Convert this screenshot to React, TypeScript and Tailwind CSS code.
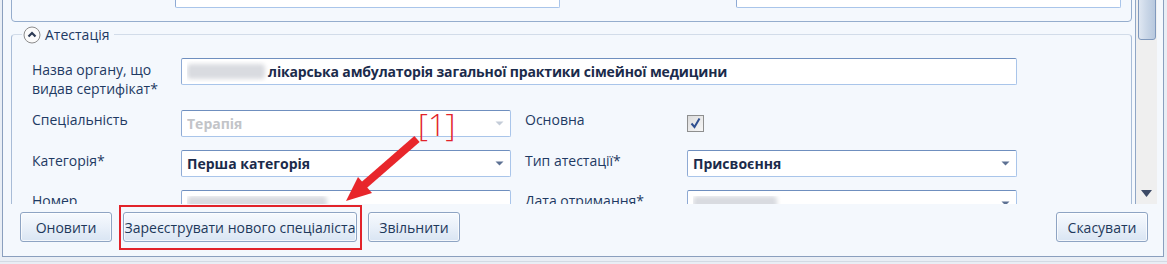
import React from 'react'

function Arrow({ light }: { light?: boolean }) {
	return (
		<svg width="9" height="5" viewBox="0 0 9 5" className="shrink-0">
			<path d="M0.5 0.5 L8.5 0.5 L4.5 4.5 Z" fill={light ? '#c4ccd8' : '#5d7193'} />
		</svg>
	)
}

function Field({ w, children, combo, light }: { w: string; children?: React.ReactNode; combo?: boolean; light?: boolean }) {
	return (
		<div className={`${w} h-[27px] shrink-0 flex items-center bg-white rounded-[2px] border border-[#a9c5ea] border-t-[#6f8fbf] border-l-[#8eaad4] pl-[5px] pr-[6px]`}>
			<div className="flex-1 flex items-center overflow-hidden whitespace-nowrap">{children}</div>
			{combo && <Arrow light={light} />}
		</div>
	)
}

function Blur({ w }: { w: string }) {
	return <div className={`${w} h-[15px] bg-[#d9dbe0] blur-[2px] rounded-sm shrink-0`} />
}

function Btn({ label, w }: { label: string; w: string }) {
	return (
		<button className={`${w} h-[30px] rounded-[3px] border border-[#8ea4c3] bg-gradient-to-b from-[#f7fafe] via-[#e9f0f9] to-[#d9e5f3] text-[14px] text-[#1e395b] shadow-[inset_0_0_0_1px_#ffffffb0]`}>
			{label}
		</button>
	)
}

export default function App() {
	return (
		<div className="relative w-[1167px] h-[264px] bg-[#e9eef5] font-['Open_Sans',sans-serif] text-[#1e3a63] overflow-hidden">
			<div className="ml-[2px] w-[1162px] h-[257px] border-x border-b border-[#8a9fbe] bg-[#f4f8fd] flex flex-col">
				<div className="h-[204px] flex shrink-0">
					<div className="flex-1 overflow-hidden">
						<div className="-mt-[40px] flex flex-col">
							{/* previous group, scrolled out */}
							<div className="ml-[8px] mr-[3px] h-[62px] border border-[#95adcd] rounded-[4px] flex items-end pb-[13px]">
								<div className="ml-[163px] flex gap-[176px]">
									<Field w="w-[385px]"><span className="font-bold text-[14px] text-[#1b2b4b]">020.12016</span></Field>
									<Field w="w-[385px]" />
								</div>
							</div>

							{/* Атестація */}
							<div className="ml-[8px] mr-[3px] mt-[12px] h-[240px] border border-[#a8bcd7] border-t-[#d2dce9] rounded-[4px] pl-[20px]">
								<div className="-mt-[9px] -ml-[10px] w-fit flex items-center gap-[4px] bg-[#f4f8fd] pr-[5px] pl-[1px]">
									<svg width="18" height="18" viewBox="0 0 18 18">
										<circle cx="9" cy="9" r="8" fill="#fbfbfb" stroke="#8c8c8c" />
										<path d="M5.5 10.5 L9 7 L12.5 10.5" fill="none" stroke="#2d3b55" strokeWidth="2.2" />
									</svg>
									<span className="text-[14px] leading-[18px]">Атестація</span>
								</div>

								<div className="mt-[14px] h-[52px] flex items-start">
									<div className="w-[149px] shrink-0 text-[14px] leading-[19px] pt-[2px]">Назва органу, що<br />видав сертифікат*</div>
									<Field w="w-[836px]">
										<Blur w="w-[78px]" />
										<span className="ml-[3px] font-bold text-[14px] tracking-[-0.15px] text-[#1b2b4b]">лікарська амбулаторія загальної практики сімейної медицини</span>
									</Field>
								</div>

								<div className="h-[40px] flex items-start">
									<div className="w-[149px] shrink-0 text-[14px] leading-[19px]">Спеціальність</div>
									<Field w="w-[330px]" combo light><span className="font-bold text-[14px] text-[#c2c4c8]">Терапія</span></Field>
									<div className="w-[162px] ml-[14px] shrink-0 text-[14px] leading-[19px]">Основна</div>
									<div className="mt-[5px] w-[17px] h-[17px] border border-[#8e8f8f] bg-gradient-to-br from-[#dcdcdc] to-[#f7f7f7] flex items-center justify-center">
										<svg width="13" height="13" viewBox="0 0 13 13">
											<path d="M2.5 6.5 L5.5 10 L10.5 1.5" fill="none" stroke="#2f4f8f" strokeWidth="2" />
										</svg>
									</div>
								</div>

								<div className="h-[40px] flex items-start">
									<div className="w-[149px] shrink-0 text-[14px] leading-[19px] pt-[1px]">Категорія*</div>
									<Field w="w-[330px]" combo><span className="font-bold text-[14px] text-[#1b2b4b]">Перша категорія</span></Field>
									<div className="w-[162px] ml-[14px] shrink-0 text-[14px] leading-[19px] pt-[1px]">Тип атестації*</div>
									<Field w="w-[330px]" combo><span className="font-bold text-[14px] text-[#1b2b4b]">Присвоєння</span></Field>
								</div>

								<div className="h-[40px] flex items-start">
									<div className="w-[149px] shrink-0 text-[14px] leading-[19px] pt-[1px]">Номер</div>
									<Field w="w-[330px]"><Blur w="w-[140px]" /></Field>
									<div className="w-[162px] ml-[14px] shrink-0 text-[14px] leading-[19px] pt-[1px]">Дата отримання*</div>
									<Field w="w-[330px]" combo><Blur w="w-[84px]" /></Field>
								</div>
							</div>
						</div>
					</div>

					{/* scrollbar */}
					<div className="w-[22px] border-l border-[#8fa6c6] bg-[#efefef] flex flex-col items-center justify-between pb-[7px] mr-[6px]">
						<div className="w-[18px] h-[41px] -mt-[1px] rounded-b-[3px] border border-[#8099bd] bg-gradient-to-r from-[#dfe7f2] via-[#c9d6e7] to-[#b7c8de]" />
						<svg width="11" height="7" viewBox="0 0 11 7">
							<path d="M0 0 L11 0 L5.5 7 Z" fill="#3c4a66" />
						</svg>
					</div>
				</div>

				{/* buttons */}
				<div className="flex-1 flex items-start pt-[8px] pl-[17px] pr-[15px] gap-[11px]">
					<Btn label="Оновити" w="w-[92px]" />
					<div className="relative">
						<Btn label="Зареєструвати нового спеціаліста" w="w-[234px]" />
						<span className="absolute -left-[4px] -right-[5px] -top-[7px] -bottom-[8px] border-2 border-[#e2232a]" />
					</div>
					<Btn label="Звільнити" w="w-[92px]" />
					<div className="ml-auto">
						<Btn label="Скасувати" w="w-[92px]" />
					</div>
				</div>
			</div>
			<div className="absolute left-0 right-0 top-[261px] h-px bg-[#d3dae4]" />

			{/* annotation */}
			<span className="absolute left-[418px] top-[105px] text-[31px] leading-[38px] font-light text-[#e2232a]">[1]</span>
			<svg className="absolute left-0 top-0 pointer-events-none" width="1167" height="264" viewBox="0 0 1167 264">
				<path d="M417 139 L363 186" stroke="#e8262b" strokeWidth="8" strokeLinecap="butt" />
				<path d="M346 201 L372 193 L358 177 Z" fill="#e8262b" />
			</svg>
		</div>
	)
}
